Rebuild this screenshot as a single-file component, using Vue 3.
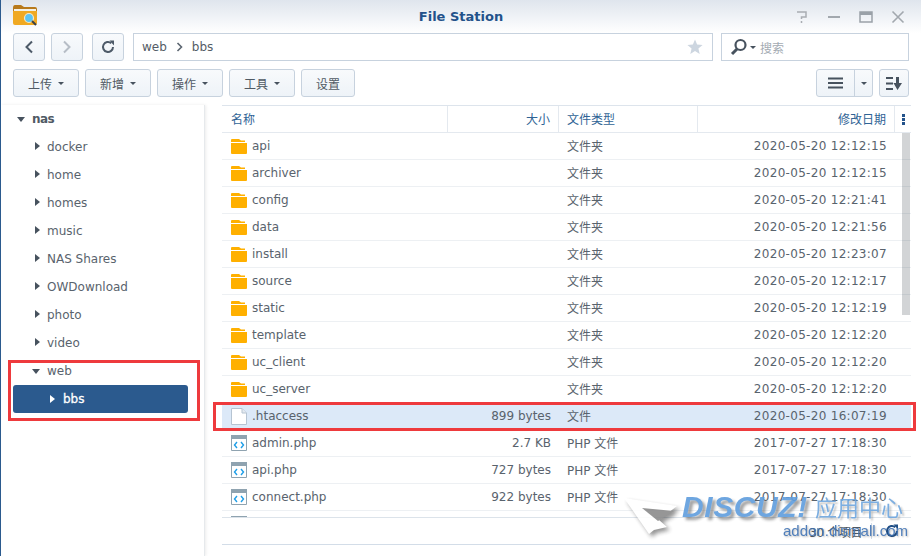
<template>
  <div class="win">
    <header class="titlebar">
      <svg class="logo" width="24" height="21" viewBox="0 0 24 21">
        <path d="M0 3 Q0 0 2 0 H8 L11 2 H22 Q24 2 24 4 V6 H0Z" fill="#b87a1c"/>
        <path d="M1 4 H23 V7 H1Z" fill="#f4f1e6"/>
        <path d="M0 6 H24 V18 Q24 20 22 20 H2 Q0 20 0 18Z" fill="#f0a922"/>
        <circle cx="16" cy="13" r="4.5" fill="#5cc4f2" stroke="#f5e8c8" stroke-width="1.2"/>
        <path d="M19 16 L23 20" stroke="#3a3f44" stroke-width="2"/>
      </svg>
      <div class="apptitle">File Station</div>
      <div class="winctl">
        <svg width="14" height="14" viewBox="0 0 14 14"><path d="M2 2 H11 V7 H6.5 V9 M6.5 11 V13" fill="none" stroke="#a9adb2" stroke-width="1.5"/></svg>
        <svg width="14" height="14" viewBox="0 0 14 14"><path d="M1 7 H13" stroke="#a2a8ae" stroke-width="2"/></svg>
        <svg width="14" height="14" viewBox="0 0 14 14"><path d="M1 2 H13 V12 H1Z" fill="none" stroke="#9aa1a8" stroke-width="1.5"/><path d="M1 3.5 H13" stroke="#9aa1a8" stroke-width="3"/></svg>
        <svg width="14" height="14" viewBox="0 0 14 14"><path d="M1.5 1.5 L12.5 12.5 M12.5 1.5 L1.5 12.5" stroke="#a2a8ae" stroke-width="1.6"/></svg>
      </div>
    </header>

    <div class="navbar">
      <button class="btn sq">
        <svg width="10" height="14" viewBox="0 0 10 14"><path d="M8 1.5 L2.5 7 L8 12.5" fill="none" stroke="#4d5a68" stroke-width="2"/></svg>
      </button>
      <button class="btn sq gap6">
        <svg width="10" height="14" viewBox="0 0 10 14"><path d="M2 1.5 L7.5 7 L2 12.5" fill="none" stroke="#b6bdc6" stroke-width="2"/></svg>
      </button>
      <button class="btn sq gap10">
        <svg width="14" height="14" viewBox="0 0 14 14"><path d="M12 7 A5 5 0 1 1 10.3 3.2" fill="none" stroke="#4d5a68" stroke-width="2"/><path d="M8.5 0.5 H13 V5.5Z" fill="#4d5a68"/></svg>
      </button>
      <div class="path">
        <span>web</span>
        <svg width="7" height="10" viewBox="0 0 7 10"><path d="M1.5 1 L5.5 5 L1.5 9" fill="none" stroke="#5b6570" stroke-width="1.6"/></svg>
        <span>bbs</span>
        <svg class="star" width="16" height="16" viewBox="0 0 16 16"><path d="M8 0.5 L10.1 5.6 L15.6 6 L11.4 9.6 L12.7 15 L8 12.1 L3.3 15 L4.6 9.6 L0.4 6 L5.9 5.6Z" fill="#cdd6e0"/></svg>
      </div>
      <div class="search">
        <svg width="18" height="18" viewBox="0 0 18 18"><circle cx="10.5" cy="7" r="5" fill="none" stroke="#47525e" stroke-width="2.2"/><path d="M7 11 L2 16" stroke="#47525e" stroke-width="3"/></svg>
        <i class="caret small"></i>
        <span class="ph">搜索</span>
      </div>
    </div>

    <div class="toolbar">
      <button v-for="b in actions" :key="b" class="btn act">{{ b }}<i class="caret"></i></button>
      <button class="btn set">设置</button>
      <div class="spacer"></div>
      <div class="btn split">
        <span class="seg">
          <svg width="15" height="12" viewBox="0 0 15 12"><path d="M0 1.5 H15 M0 6 H15 M0 10.5 H15" stroke="#47525e" stroke-width="2"/></svg>
        </span>
        <span class="seg2"><i class="caret"></i></span>
      </div>
      <button class="btn sort">
        <svg width="16" height="13" viewBox="0 0 16 13"><path d="M0 1 H7 M0 6.5 H7 M0 12 H7" stroke="#47525e" stroke-width="2"/><path d="M10 0 H13 V6 H16 L11.5 13 L7.5 6 H10Z" fill="#47525e"/></svg>
      </button>
    </div>

    <div class="main">
      <aside class="side">
        <div class="node root"><i class="tri down"></i><b>nas</b></div>
        <div v-for="n in shares" :key="n" class="node child"><i class="tri right"></i>{{ n }}</div>
        <div class="node child"><i class="tri down"></i>web</div>
        <div class="node sel"><i class="tri right white"></i>bbs</div>
      </aside>

      <section class="list">
        <div class="thead">
          <div class="c name"><span class="lift">名称</span></div>
          <div class="c size"><span class="lift">大小</span></div>
          <div class="c type"><span class="lift">文件类型</span></div>
          <div class="c date"><span class="lift">修改日期</span></div>
          <div class="c more"><i></i><i></i><i></i></div>
        </div>
        <div class="tbody">
          <div v-for="r in rows" :key="r.n" class="row" :class="{ hl: r.hl }">
            <div class="c name">
              <svg v-if="r.k === 'd'" class="ic" width="16" height="15" viewBox="0 0 16 15"><path d="M0 1 Q0 0 1 0 H8 L10 1.5 H14 V3 H0Z" fill="#ffb000"/><path d="M0 4 H16 V14 Q16 15 15 15 H1 Q0 15 0 14Z" fill="#ffb000"/></svg>
              <svg v-else-if="r.k === 'f'" class="ic" width="16" height="17" viewBox="0 0 16 17"><path d="M.5 .5 H11 L15.5 5 V16.5 H.5Z" fill="#fff" stroke="#b6c4d2"/><path d="M11 .5 V5 H15.5" fill="#e4eaf0" stroke="#b6c4d2"/></svg>
              <svg v-else class="ic" width="16" height="16" viewBox="0 0 16 16"><path d="M.5 .5 H15.5 V15.5 H.5Z" fill="#fff" stroke="#8fa3b0"/><path d="M0 0 H16 V4 H0Z" fill="#8fa3b0"/><path d="M6 7 L3.5 10 L6 13 M10 7 L12.5 10 L10 13" fill="none" stroke="#1e9ee8" stroke-width="1.4"/></svg>
              <span>{{ r.n }}</span>
            </div>
            <div class="c size">{{ r.s }}</div>
            <div class="c type"><span class="lift">{{ r.t }}</span></div>
            <div class="c date num">{{ r.d }}</div>
          </div>
          <div class="row partial"><svg class="ic" width="16" height="1" viewBox="0 0 16 1"><path d="M0 0 H16 V1 H0Z" fill="#8fa3b0"/></svg></div>
          <div class="thumb"></div>
        </div>
        <footer class="status">
          <span class="count">30 个项目</span>
          <i class="vsep"></i>
          <svg width="14" height="14" viewBox="0 0 14 14"><path d="M12 7 A5 5 0 1 1 10.3 3.2" fill="none" stroke="#1f4e86" stroke-width="2"/><path d="M8.5 0.5 H13 V5.5Z" fill="#1f4e86"/></svg>
        </footer>
      </section>
    </div>

    <div class="mark left-mark"></div>
    <div class="mark right-mark"></div>

    <div class="wm">
      <svg class="cursor" width="60" height="50" viewBox="0 0 60 50">
        <path d="M2 8 L55 16 L37 30 L45 37 L32 40 L27 44 Z" fill="#fff"/>
        <path d="M20 18 L52 21 L36 31 Z" fill="#8b8b8b"/>
      </svg>
      <span class="dz">DISCUZ!</span>
      <span class="cn">应用中心</span>
      <span class="addr">addon.dismall.com</span>
    </div>
  </div>
</template>

<script setup>
const actions = ['上传', '新增', '操作', '工具']
const shares = ['docker', 'home', 'homes', 'music', 'NAS Shares', 'OWDownload', 'photo', 'video']
const dir = (n, d) => ({ n, s: '', t: '文件夹', d, k: 'd' })
const php = (n, s) => ({ n, s, t: 'PHP 文件', d: '2017-07-27 17:18:30', k: 'p' })
const rows = [
  dir('api', '2020-05-20 12:12:15'),
  dir('archiver', '2020-05-20 12:12:15'),
  dir('config', '2020-05-20 12:21:41'),
  dir('data', '2020-05-20 12:21:56'),
  dir('install', '2020-05-20 12:23:07'),
  dir('source', '2020-05-20 12:12:17'),
  dir('static', '2020-05-20 12:12:19'),
  dir('template', '2020-05-20 12:12:20'),
  dir('uc_client', '2020-05-20 12:12:20'),
  dir('uc_server', '2020-05-20 12:12:20'),
  { n: '.htaccess', s: '899 bytes', t: '文件', d: '2020-05-20 16:07:19', k: 'f', hl: true },
  php('admin.php', '2.7 KB'),
  php('api.php', '727 bytes'),
  php('connect.php', '922 bytes'),
]
</script>

<style>
html, body { margin: 0; background: #fff; overflow: hidden; }
</style>

<style scoped>
.win {
  position: relative;
  width: 921px;
  height: 556px;
  box-sizing: border-box;
  border-left: 1px solid #2b5a8e;
  background: #fff;
  overflow: hidden;
  font-family: "DejaVu Sans", "Noto Sans CJK SC", sans-serif;
  font-size: 12px;
  color: #505a64;
  display: flex;
  flex-direction: column;
}
.titlebar {
  height: 33px;
  flex: none;
  display: flex;
  align-items: center;
  position: relative;
  padding-left: 12px;
  background: linear-gradient(#dfe5ed, #ffffff);
}
.logo { margin-top: -3px; }
.apptitle {
  position: absolute;
  left: 0;
  right: 0;
  text-align: center;
  font-weight: bold;
  font-size: 13px;
  color: #23528a;
}
.winctl {
  margin-left: auto;
  margin-right: 16px;
  display: flex;
  gap: 18px;
  position: relative;
}
.btn {
  box-sizing: border-box;
  height: 28px;
  border: 1px solid #c7d2de;
  border-radius: 3px;
  background: linear-gradient(#f8fafc, #eef3f8);
  font: inherit;
  color: #505a64;
  padding: 0;
  display: flex;
  align-items: center;
  justify-content: center;
}
.navbar {
  height: 28px;
  flex: none;
  display: flex;
  padding-left: 12px;
}
.sq { width: 32px; }
.gap6 { margin-left: 6px; }
.gap10 { margin-left: 9px; }
.path {
  box-sizing: border-box;
  margin-left: 9px;
  width: 580px;
  height: 28px;
  border: 1px solid #c7d2de;
  display: flex;
  align-items: center;
  padding-left: 8px;
  gap: 9px;
  color: #545c66;
}
.star { margin-left: auto; margin-right: 9px; }
.search {
  box-sizing: border-box;
  margin-left: 8px;
  width: 188px;
  height: 28px;
  border: 1px solid #c7d2de;
  display: flex;
  align-items: center;
  padding-left: 8px;
}
.ph { color: #a4abb3; margin-left: 4px; }
.caret {
  display: inline-block;
  width: 0;
  height: 0;
  border: 3px solid transparent;
  border-top: 3.5px solid #47525e;
  border-bottom: 0;
  margin-left: 6px;
}
.caret.small { margin-left: 2px; }
.toolbar {
  height: 28px;
  flex: none;
  margin-top: 8px;
  display: flex;
  padding-left: 12px;
  padding-right: 12px;
  gap: 6px;
}
.act { width: 66px; }
.set { width: 54px; }
.spacer { flex: 1; }
.split { width: 57px; justify-content: flex-start; }
.seg { width: 37px; height: 100%; display: flex; align-items: center; justify-content: center; border-right: 1px solid #c7d2de; }
.seg2 { flex: 1; display: flex; justify-content: center; }
.seg2 .caret { margin: 0; }
.sort { width: 30px; }
.main {
  flex: 1;
  min-height: 0;
  display: flex;
  margin-top: 8px;
}
.side {
  width: 204px;
  flex: none;
  box-sizing: border-box;
  border-right: 1px solid #e6e9ec;
  box-shadow: 1px 0 3px rgba(0, 0, 0, .08);
  padding: 0 16px 0 0;
}
.node {
  height: 28px;
  display: flex;
  align-items: center;
  position: relative;
  color: #59636d;
}
.root { padding-left: 16px; height: 28px; }
.root b { margin-left: 7px; font-size: 12px; letter-spacing: -.6px; color: #505a64; }
.child { padding-left: 46px; }
.sel {
  margin-left: 12px;
  background: #2b5a8e;
  border-radius: 3px;
  color: #fff;
  -webkit-text-stroke: .3px #fff;
  padding-left: 50px;
}
.tri { position: absolute; width: 0; height: 0; }
.tri.down {
  border-left: 4px solid transparent;
  border-right: 4px solid transparent;
  border-top: 5px solid #47525e;
}
.root .tri { position: static; }
.child .tri.down { left: 31px; top: 12px; }
.tri.right {
  left: 34px;
  top: 9px;
  border-top: 4px solid transparent;
  border-bottom: 4px solid transparent;
  border-left: 5px solid #47525e;
}
.tri.white { border-left-color: #fff; left: 37px; top: 10px; }
.list {
  margin-left: 17px;
  flex: 1;
  min-width: 0;
  margin-right: 10px;
  display: flex;
  flex-direction: column;
}
.thead {
  height: 28px;
  flex: none;
  box-sizing: border-box;
  display: flex;
  border-top: 1px solid #dde4ec;
  border-bottom: 1px solid #e4e9ef;
  color: #2f6395;
}
.thead .c { border-right: 1px solid #e4e9ef; }
.c { display: flex; align-items: center; flex: none; box-sizing: border-box; }
.lift { margin-top: -2px; }
.name { width: 226px; padding-left: 9px; }
.size { width: 111px; justify-content: flex-end; padding-right: 8px; }
.type { width: 139px; padding-left: 8px; }
.date { width: 197px; justify-content: flex-end; padding-right: 8px; }
.more { width: 16px; flex-direction: column; justify-content: center; gap: 1px; border-right: 0 !important; }
.more i { width: 3px; height: 3px; background: #23528a; display: block; }
.tbody { position: relative; height: 385px; flex: none; }
.row {
  box-sizing: border-box;
  height: 27px;
  display: flex;
  border-bottom: 1px solid #edf0f3;
  color: #59636d;
}
.row.hl { background: #dce9f8; }
.row.partial { height: 7px; padding: 5px 0 0 9px; border-bottom: 1px solid #dce3ea; }
.num { letter-spacing: .3px; }
.ic { margin-right: 5px; flex: none; }
.thumb {
  position: absolute;
  right: 1px;
  top: 0;
  width: 8px;
  height: 182px;
  background: rgba(30, 40, 50, .2);
}
.status {
  flex: none;
  box-sizing: border-box;
  height: 27px;
  border-bottom: 1px solid #d3dde8;
  display: flex;
  align-items: center;
  justify-content: flex-end;
  padding-right: 12px;
  color: #505a64;
}
.count { letter-spacing: -.4px; }
.vsep { width: 1px; height: 16px; background: #d3dde8; margin: 0 13px 0 9px; }
.mark {
  position: absolute;
  box-sizing: border-box;
  border: 3px solid #ee3a3d;
  pointer-events: none;
}
.left-mark { left: 7px; top: 360px; width: 192px; height: 61px; }
.right-mark { left: 212px; top: 402px; width: 703px; height: 29px; }
.wm {
  position: absolute;
  left: 621px;
  top: 490px;
  width: 299px;
  height: 60px;
  pointer-events: none;
  opacity: .9;
}
.cursor { position: absolute; left: 0; top: 0; filter: drop-shadow(3px 3px 2px rgba(40, 40, 40, .55)); }
.dz {
  position: absolute;
  left: 60px;
  top: 0;
  font: italic bold 30px "Liberation Sans", sans-serif;
  letter-spacing: .6px;
  color: #5f9ddd;
  text-shadow: 3px 3px 3px rgba(60, 60, 60, .55);
}
.cn {
  position: absolute;
  left: 193px;
  top: 1px;
  font: 22px "Noto Sans CJK SC", sans-serif;
  line-height: 30px;
  color: #6ea6de;
  text-shadow: 2px 2px 2px rgba(60, 60, 60, .35);
}
.addr {
  position: absolute;
  left: 161px;
  top: 32px;
  font: 15px "Liberation Sans", sans-serif;
  color: #3e72b4;
  text-shadow: 1px 1px 2px rgba(60, 60, 60, .4);
}
</style>
